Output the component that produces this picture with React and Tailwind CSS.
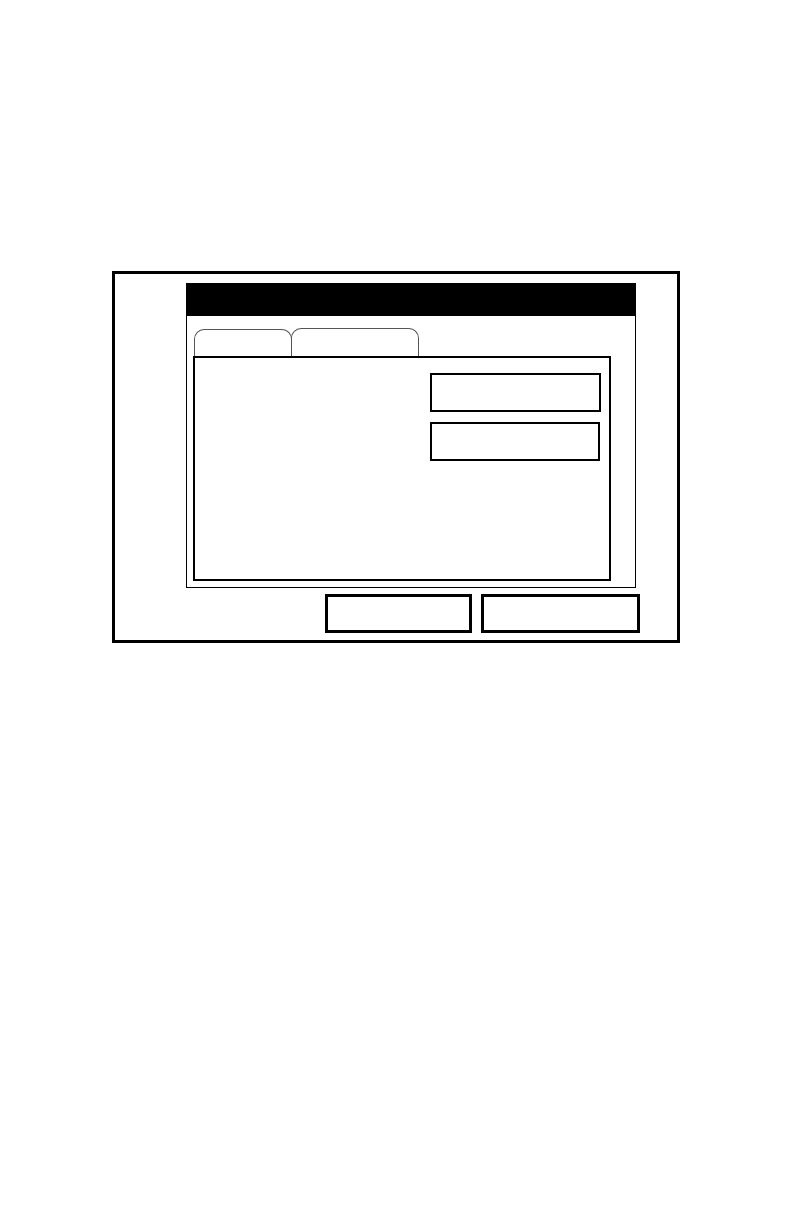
export default function App() {
  return (
    <div className="min-h-[1224px] w-[792px] bg-white pt-[271px] pl-[112px] font-['Liberation_Sans',sans-serif]">
      {/* outer frame */}
      <div className="w-[568px] border-[3px] border-black pl-[71px] pt-[9px] pb-[7px]">
        {/* window */}
        <div className="w-[450px] border-x border-b border-black pb-[6px]">
          <div className="h-[33px] bg-black" />
          <div className="flex h-[40px] items-end pl-[7px] pt-[13px]">
            <div className="h-[27px] w-[98px] rounded-t-[10px] border border-b-0 border-[#555]" />
            <div className="-ml-px h-[28px] w-[128px] rounded-t-[10px] border border-b-0 border-[#555]" />
          </div>
          <div className="ml-[6px] flex h-[225px] w-[418px] flex-col items-end gap-[10px] border-2 border-black pr-[8px] pt-[15px]">
            <div className="h-[39px] w-[171px] border-2 border-black" />
            <div className="mr-px h-[39px] w-[170px] border-2 border-black" />
          </div>
        </div>
        <div className="mt-[6px] ml-[139px] flex gap-[9px]">
          <button className="h-[39px] w-[147px] border-[3px] border-black bg-white" />
          <button className="h-[39px] w-[159px] border-[3px] border-black bg-white" />
        </div>
      </div>
    </div>
  )
}
